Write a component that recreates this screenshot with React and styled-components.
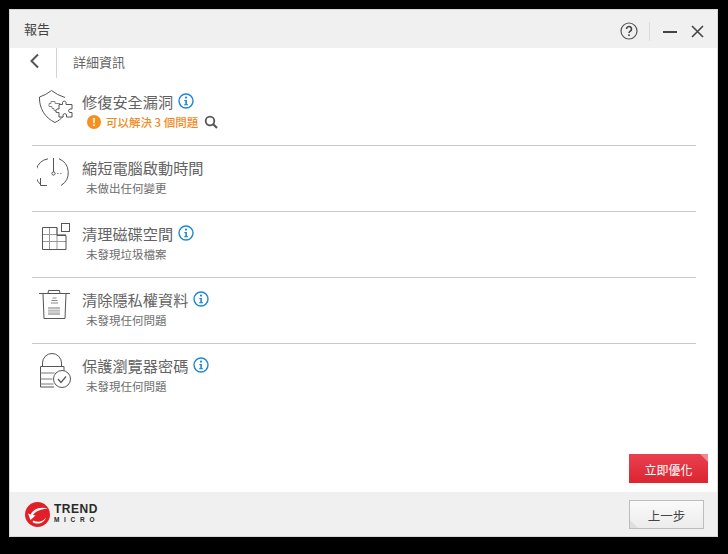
import React from "react";
import styled, { createGlobalStyle } from "styled-components";

const Global = createGlobalStyle`
  html, body {
    margin: 0;
    padding: 0;
    height: 554px;
    background: #000;
    overflow: hidden;
    font-family: "Noto Sans CJK TC", "Noto Sans", sans-serif;
  }
`;

const Page = styled.div`
  width: 728px;
  height: 554px;
  padding: 9px;
  box-sizing: border-box;
`;

const Window = styled.div`
  width: 709px;
  height: 528px;
  box-sizing: border-box;
  border: 1px solid #d8d8d8;
  background: #fff;
  display: flex;
  flex-direction: column;
`;

const TitleBar = styled.div`
  height: 38px;
  flex: none;
  background: #f0f0f0;
  display: flex;
  align-items: center;
  padding: 0 13px 0 14px;
`;

const Title = styled.div`
  flex: 1;
  font-size: 13px;
  color: #444;
  margin-top: -2px;
`;

const WinControls = styled.div`
  display: flex;
  align-items: center;
  padding-top: 4px;
`;

const Separator = styled.div`
  width: 1px;
  height: 19px;
  background: #dcdcdc;
  margin: 0 13px 0 11px;
`;

const ControlIcon = styled.svg`
  display: block;
  flex: none;
  margin-left: ${(p) => p.$gap || 0}px;
`;

const Content = styled.div`
  flex: 1;
  display: flex;
  flex-direction: column;
  min-height: 0;
`;

const Crumb = styled.div`
  height: 32px;
  display: flex;
  align-items: flex-start;
  flex: none;
`;

const BackCell = styled.div`
  width: 47px;
  height: 30px;
  box-sizing: border-box;
  border-right: 1px solid #d4d4d4;
  display: flex;
  align-items: center;
  padding: 0 0 4px 19px;
`;

const CrumbText = styled.div`
  margin-left: 16px;
  font-size: 13px;
  line-height: 28px;
  color: #666;
`;

const List = styled.div`
  margin: 0 21px 0 22px;
  flex: none;
`;

const Row = styled.div`
  height: 66px;
  box-sizing: border-box;
  display: flex;
  align-items: flex-start;
  border-bottom: ${(p) => (p.$last ? "none" : "1px solid #c8c8c8")};
`;

const RowIcon = styled.div`
  width: 50px;
  height: 40px;
  flex: none;
  margin-top: 8px;
  padding-left: 5px;
  box-sizing: border-box;
`;

const RowBody = styled.div`
  padding-top: 10px;
`;

const RowTitle = styled.div`
  display: flex;
  align-items: center;
  font-size: 15.2px;
  line-height: 22px;
  color: #636363;
  height: 22px;
`;

const InfoIcon = styled.svg`
  display: block;
  margin-left: 5px;
`;

const RowSub = styled.div`
  display: flex;
  align-items: center;
  height: 18px;
  margin-top: 1px;
  margin-left: ${(p) => (p.$warn ? 5 : 4)}px;
  font-size: 11.5px;
  color: ${(p) => (p.$warn ? "#f08a1d" : "#6e6e6e")};
  font-weight: ${(p) => (p.$warn ? 500 : 400)};
`;

const WarnDot = styled.span`
  width: 14px;
  height: 14px;
  border-radius: 50%;
  background: #f5901e;
  color: #fff;
  font-size: 11px;
  font-weight: 700;
  line-height: 14px;
  text-align: center;
  margin-right: 5px;
  font-family: "Liberation Sans", sans-serif;
`;

const SearchIcon = styled.svg`
  margin-left: 6px;
  display: block;
`;

const Spacer = styled.div`
  flex: 1;
`;

const ActionRow = styled.div`
  display: flex;
  justify-content: flex-end;
  padding: 0 9px 9px 0;
`;

const corner = `
  position: relative;
  box-sizing: border-box;
  display: flex;
  align-items: center;
  justify-content: center;
  font-family: inherit;
  cursor: pointer;
`;

const FixButton = styled.button`
  ${corner}
  width: 79px;
  height: 29px;
  border: none;
  background: linear-gradient(#e9404f, #dc2530);
  color: #fff;
  font-size: 12px;
  padding: 2px 0 0;
  &::after {
    content: "";
    position: absolute;
    top: 0;
    right: 0;
    border-style: solid;
    border-width: 0 8px 8px 0;
    border-color: transparent #f08a92 transparent transparent;
  }
`;

const Footer = styled.div`
  height: 44px;
  flex: none;
  background: #f0f0f0;
  display: flex;
  align-items: center;
  justify-content: space-between;
  padding: 0 13px 0 15px;
`;

const Logo = styled.div`
  display: flex;
  align-items: center;
  gap: 4px;
`;

const LogoText = styled.div`
  display: flex;
  flex-direction: column;
  font-family: "Liberation Sans", sans-serif;
  font-weight: 700;
  color: #2a2a2a;
`;

const LogoTrend = styled.span`
  font-size: 12px;
  line-height: 11px;
  letter-spacing: 0.5px;
`;

const LogoMicro = styled.span`
  font-size: 6.5px;
  line-height: 9px;
  letter-spacing: 4.7px;
`;

const BackButton = styled.button`
  ${corner}
  width: 75px;
  height: 29px;
  border: 1px solid #bdbdbd;
  background: linear-gradient(#fafafa, #ececec);
  color: #444;
  font-size: 12.5px;
  padding: 2px 0 0;
  &::after {
    content: "";
    position: absolute;
    bottom: 0;
    left: 0;
    border-style: solid;
    border-width: 8px 0 0 8px;
    border-color: transparent transparent transparent #dedede;
  }
`;

const Info = () => (
  <InfoIcon width="16" height="16" viewBox="0 0 16 16">
    <circle cx="8" cy="8" r="7" fill="#fff" stroke="#1b87d6" strokeWidth="1.4" />
    <circle cx="8" cy="4.6" r="1.1" fill="#1b87d6" />
    <path d="M6.3 7h2.6v4.2h1.1v1H6.1v-1h1.2V8H6.3z" fill="#1b87d6" />
  </InfoIcon>
);

const ShieldIcon = () => (
  <svg width="36" height="36" viewBox="0 0 36 36" fill="none" stroke="#555" strokeWidth="1">
    <path d="M14.500 2.500Q9 7 2.500 9C2 20 8 30 18 34.500c3-1.500 6-3.500 8-6" />
    <path d="M14.500 2.500Q20 7 28 9.500" />
    <path d="M14 13.500h4v2h5v9h-4v-2h-2v-2h-2v-2h-3v-3h2z" stroke="#888" />
    <path d="M22 16.500h3.500v-2a1.800 1.800 0 0 1 3.500 0v2H35v4.500h-2a1.800 1.800 0 0 0 0 3.500h2V29h-5.500v-2a1.800 1.800 0 0 0-3.500 0v2h-4v-4.500h-1.800a1.800 1.800 0 0 1 0-3.500H22z" fill="#fff" />
  </svg>
);

const ClockIcon = () => (
  <svg width="36" height="36" viewBox="0 0 36 36" fill="none" stroke="#555" strokeWidth="1">
    <path d="M11 4.800A15 15 0 0 0 3.500 30.500" />
    <path d="M22 4.800A15 15 0 0 1 24 31.500" />
    <path d="M3.500 24v7.500H10" />
    <path d="M16.500 4v14" />
    <circle cx="16.500" cy="19.500" r="1.600" />
    <path d="M20 19.500h1.500M23 19.500h1.500" stroke="#888" />
  </svg>
);

const GridIcon = () => (
  <svg width="36" height="36" viewBox="0 0 36 36" fill="none" stroke="#555" strokeWidth="1">
    <path d="M12.500 7.500v22M20 7.500v22M5.500 14.500h23.500M5.500 21.500h23.500" stroke="#999" />
    <path d="M5.500 7.500h14.500v8h9v14h-23.500z" />
    <rect x="24.500" y="3.500" width="8" height="8" />
  </svg>
);

const TrashIcon = () => (
  <svg width="36" height="36" viewBox="0 0 36 36" fill="none" stroke="#555" strokeWidth="1">
    <path d="M2 7.500h31" />
    <path d="M11 7.500l.5-3h11l.5 3" />
    <path d="M6 7.500l1 25h21l1-25" />
    <path d="M15.500 12h4M14.500 14.500h6M14 17h7" stroke="#888" />
    <rect x="11" y="21" width="12" height="8" fill="#bbb" stroke="none" />
    <path d="M11 23.500h12M11 26h12" stroke="#e5e5e5" />
  </svg>
);

const LockIcon = () => (
  <svg width="36" height="36" viewBox="0 0 36 36" fill="none" stroke="#555" strokeWidth="1">
    <path d="M5.500 14v-3a9.500 9.500 0 0 1 19 0v3" />
    <path d="M17 35H3.500V14.500H27v5" />
    <path d="M3.500 21h14M3.500 27h12M3.500 32h13" stroke="#777" />
    <circle cx="25" cy="27" r="8.500" fill="#fff" />
    <path d="M21 27l3 3.500 5-6" strokeWidth="1.200" />
  </svg>
);

const rows = [
  { title: "修復安全漏洞", icon: ShieldIcon, info: true, warn: "可以解決 3 個問題" },
  { title: "縮短電腦啟動時間", icon: ClockIcon, sub: "未做出任何變更" },
  { title: "清理磁碟空間", icon: GridIcon, info: true, sub: "未發現垃圾檔案" },
  { title: "清除隱私權資料", icon: TrashIcon, info: true, sub: "未發現任何問題" },
  { title: "保護瀏覽器密碼", icon: LockIcon, info: true, sub: "未發現任何問題" },
];

export default function App() {
  return (
    <Page>
      <Global />
      <Window>
        <TitleBar>
          <Title>報告</Title>
          <WinControls>
            <ControlIcon width="18" height="18" viewBox="0 0 18 18">
              <circle cx="9" cy="9" r="8" fill="none" stroke="#555" strokeWidth="1.2" />
              <path d="M6.500 7a2.500 2.500 0 1 1 3.800 2.100C9.400 9.700 9 10.200 9 11" fill="none" stroke="#444" strokeWidth="1.600" />
              <rect x="8.200" y="12.300" width="1.600" height="1.700" fill="#444" />
            </ControlIcon>
            <Separator />
            <ControlIcon width="14" height="13" viewBox="0 0 14 13">
              <rect x="0" y="6" width="14" height="2" fill="#444" />
            </ControlIcon>
            <ControlIcon $gap={14} width="13" height="13" viewBox="0 0 13 13">
              <path d="M1 1l11 11M12 1L1 12" stroke="#444" strokeWidth="1.600" fill="none" />
            </ControlIcon>
          </WinControls>
        </TitleBar>
        <Content>
          <Crumb>
            <BackCell>
              <svg width="11" height="16" viewBox="0 0 11 16">
                <path d="M9 1.500L2.500 8 9 14.500" fill="none" stroke="#555" strokeWidth="2" />
              </svg>
            </BackCell>
            <CrumbText>詳細資訊</CrumbText>
          </Crumb>
          <List>
            {rows.map((r, i) => {
              const Icon = r.icon;
              return (
                <Row key={r.title} $last={i === rows.length - 1}>
                  <RowIcon>
                    <Icon />
                  </RowIcon>
                  <RowBody>
                    <RowTitle>
                      {r.title}
                      {r.info && <Info />}
                    </RowTitle>
                    {r.warn ? (
                      <RowSub $warn>
                        <WarnDot>!</WarnDot>
                        {r.warn}
                        <SearchIcon width="14" height="14" viewBox="0 0 14 14">
                          <circle cx="6" cy="6" r="4.300" fill="none" stroke="#555" strokeWidth="1.800" />
                          <path d="M9 9l4 4" stroke="#555" strokeWidth="2.200" />
                        </SearchIcon>
                      </RowSub>
                    ) : (
                      <RowSub>{r.sub}</RowSub>
                    )}
                  </RowBody>
                </Row>
              );
            })}
          </List>
          <Spacer />
          <ActionRow>
            <FixButton>立即優化</FixButton>
          </ActionRow>
        </Content>
        <Footer>
          <Logo>
            <svg width="25" height="25" viewBox="0 0 25 25">
              <circle cx="12.500" cy="12.500" r="12.500" fill="#e01f26" />
              <path d="M23 6.500C16 4.500 9 6 5.500 12.500L3 11.500l2.500 6.500 5-4.500-2.500-.5C11 9 16 7 23 6.500z" fill="#fff" />
              <path d="M8.500 18.500c4 2.500 9 1.500 12.500-3-1.500 5.500-9 8-13.500 4.500z" fill="#fff" />
            </svg>
            <LogoText>
              <LogoTrend>TREND</LogoTrend>
              <LogoMicro>MICRO</LogoMicro>
            </LogoText>
          </Logo>
          <BackButton>上一步</BackButton>
        </Footer>
      </Window>
    </Page>
  );
}
